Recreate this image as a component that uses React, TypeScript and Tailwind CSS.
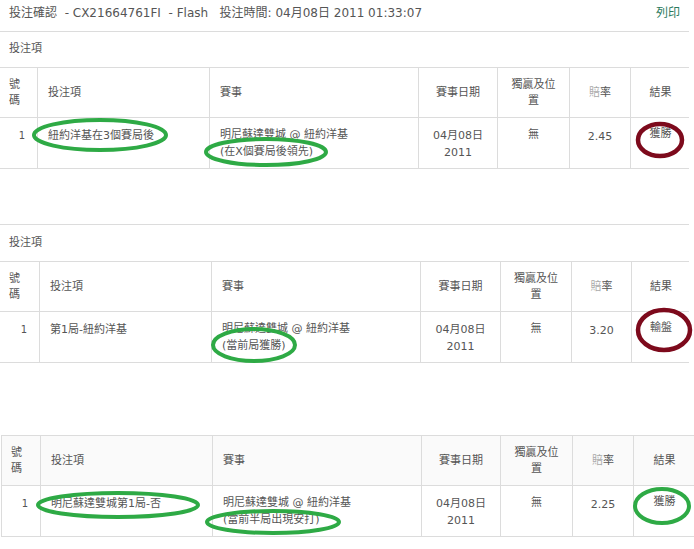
import React from "react";

type Sec = {
  w: string[];
  item: string;
  evt2: string;
  odds: string;
  result: string;
  headBg: string;
  leftBorder?: boolean;
};

function Table({ s }: { s: Sec }) {
  const w = s.w;
  const cell = "border-r border-[#dcdcdc] shrink-0";
  return (
    <div className={"border-t border-b border-[#dcdcdc] " + (s.leftBorder ? "ml-[1px] border-l" : "")}>
      <div className={"flex h-[50px] border-b border-[#dcdcdc] text-[11px] leading-[16px] text-[#555] " + s.headBg}>
        <div className={cell + " flex items-center pl-[9px] " + w[0]}>
          號<br />碼
        </div>
        <div className={cell + " flex items-center pl-[10px] " + w[1]}>投注項</div>
        <div className={cell + " flex items-center pl-[10px] " + w[2]}>賽事</div>
        <div className={cell + " flex items-center justify-center " + w[3]}>賽事日期</div>
        <div className={cell + " flex items-center justify-center text-center " + w[4]}>
          獨贏及位<br />置
        </div>
        <div className={cell + " flex items-center justify-center " + w[5]}>
          <span className="text-[#aaa]">賠</span>率
        </div>
        <div className={"flex items-center justify-center shrink-0 " + w[6]}>結果</div>
      </div>
      <div className="flex h-[50px] text-[11px] leading-[17px] text-[#555] bg-white">
        <div className={cell + " pt-[9px] text-right pr-[12px] text-[10px] " + w[0]}>1</div>
        <div className={cell + " pt-[9px] pl-[10px] " + w[1]}>{s.item}</div>
        <div className={cell + " pt-[8px] pl-[10px] " + w[2]}>
          明尼蘇達雙城 @ 紐約洋基<br />{s.evt2}
        </div>
        <div className={cell + " pt-[9px] text-center " + w[3]}>
          04月08日<br />2011
        </div>
        <div className={cell + " pt-[8px] text-center " + w[4]}>無</div>
        <div className={cell + " pt-[10px] text-center " + w[5]}>{s.odds}</div>
        <div className={"pt-[7px] text-center shrink-0 " + w[6]}>{s.result}</div>
      </div>
    </div>
  );
}

const s1: Sec = {
  w: ["w-[38px]", "w-[172px]", "w-[209px]", "w-[79px]", "w-[72px]", "w-[61px]", "w-[59px]"],
  item: "紐約洋基在3個賽局後",
  evt2: "(在X個賽局後領先)",
  odds: "2.45",
  result: "獲勝",
  headBg: "bg-white",
};
const s2: Sec = {
  w: ["w-[40px]", "w-[172px]", "w-[209px]", "w-[80px]", "w-[71px]", "w-[60px]", "w-[58px]"],
  item: "第1局-紐約洋基",
  evt2: "(當前局獲勝)",
  odds: "3.20",
  result: "輸盤",
  headBg: "bg-white",
};
const s3: Sec = {
  w: ["w-[39px]", "w-[172px]", "w-[209px]", "w-[79px]", "w-[72px]", "w-[61px]", "w-[61px]"],
  item: "明尼蘇達雙城第1局-否",
  evt2: "(當前半局出現安打)",
  odds: "2.25",
  result: "獲勝",
  headBg: "bg-[#fafafa]",
  leftBorder: true,
};

export default function App() {
  const G = "#2eaa45";
  const R = "#7d0a1c";
  return (
    <div className="relative w-[694px] h-[549px] bg-white overflow-hidden font-['DejaVu_Sans','Noto_Sans_CJK_TC',sans-serif]">
      <div className="w-[689px]">
        <div className="h-[32px] flex items-center justify-between pb-[5px] border-b border-[#dcdcdc] text-[12px] text-[#555]">
          <span className="pl-[9px] whitespace-pre">投注確認  - CX21664761FI  - Flash   投注時間: 04月08日 2011 01:33:07</span>
          <span className="pr-[9px] text-[#2b7a5c]">列印</span>
        </div>
        <div className="h-[35px] flex items-center pl-[9px] text-[11px] text-[#555]">投注項</div>
        <Table s={s1} />
        <div className="mt-[55px] border-t border-[#dcdcdc] h-[37px] flex items-center pl-[9px] text-[11px] text-[#555]">
          投注項
        </div>
        <Table s={s2} />
      </div>
      <div className="mt-[72px] w-[694px]">
        <Table s={s3} />
      </div>
      <svg className="absolute left-0 top-0 pointer-events-none" width="694" height="549">
        <g fill="none" strokeWidth="4">
          <ellipse cx="100" cy="135" rx="66" ry="15" stroke={G} />
          <ellipse cx="266" cy="152" rx="60" ry="13" stroke={G} />
          <ellipse cx="660" cy="140" rx="22" ry="16" stroke={R} strokeWidth="4.5" />
          <ellipse cx="254" cy="345" rx="41" ry="16" stroke={G} />
          <ellipse cx="664" cy="330" rx="26" ry="20" stroke={R} strokeWidth="4.5" />
          <ellipse cx="118" cy="505" rx="80" ry="12" stroke={G} />
          <ellipse cx="273" cy="522" rx="66" ry="11" stroke={G} />
          <ellipse cx="662" cy="506" rx="27" ry="17" stroke={G} />
        </g>
      </svg>
    </div>
  );
}
